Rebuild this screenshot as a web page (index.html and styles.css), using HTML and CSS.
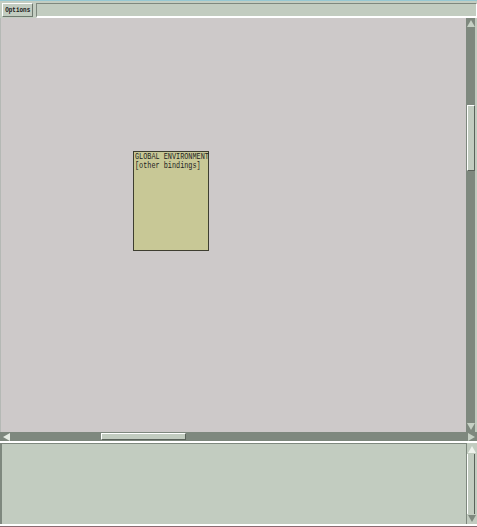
FILE: index.html
```html
<!DOCTYPE html>
<html>
<head>
<meta charset="utf-8">
<link rel="stylesheet" href="styles.css">
</head>
<body>
<div class="app">
  <div class="topbar">
    <div class="btn"><span class="btn-label">Options</span></div>
    <div class="entry"></div>
  </div>
  <div class="main">
    <div class="canvas">
      <div class="env">
        <div class="env-text">GLOBAL ENVIRONMENT</div>
        <div class="env-text">[other bindings]</div>
      </div>
    </div>
    <div class="vscroll">
      <div class="arrow up"></div>
      <div class="track">
        <div class="vthumb"></div>
      </div>
      <div class="arrow down"></div>
    </div>
  </div>
  <div class="hscroll">
    <div class="arrow left"></div>
    <div class="htrack">
      <div class="hthumb"></div>
    </div>
    <div class="arrow right"></div>
  </div>
  <div class="bottom">
    <div class="textarea"></div>
    <div class="vscroll light">
      <div class="arrow up"></div>
      <div class="track full"></div>
      <div class="arrow down"></div>
    </div>
  </div>
  <div class="footer"></div>
</div>
</body>
</html>
```
FILE: styles.css
```css
* { box-sizing: border-box; }
html, body { margin: 0; padding: 0; }
body { width: 477px; height: 527px; overflow: hidden; background: #c2ccc0; font-family: "Liberation Mono", monospace; }
.app { display: flex; flex-direction: column; width: 477px; height: 527px; }

.topbar { height: 18px; display: flex; align-items: flex-start; gap: 3px; padding: 2px 0 0 2px; background: #c3cdc1; border-top: 1px solid #96c8d2; }
.btn { width: 31px; height: 14px; background: #c2ccc0; border-top: 1px solid #fff; border-left: 1px solid #fff; border-right: 1px solid #6e786e; border-bottom: 1px solid #6e786e; display: flex; align-items: center; justify-content: center; overflow: hidden; }
.btn-label { font-size: 7px; font-weight: bold; color: #1a1a1a; transform: scaleX(0.85); white-space: nowrap; }
.entry { flex: 1; height: 15px; background: #c2ccc0; border-top: 1px solid #7e887e; border-left: 1px solid #7e887e; border-right: 1px solid #fff; border-bottom: 2px solid #fff; }

.main { height: 414px; display: flex; }
.canvas { flex: 1; position: relative; background: #cdc9c9; border-left: 1px solid #b5b9b5; }
.env { position: absolute; left: 132px; top: 133px; width: 76px; height: 100px; background: #c8c896; border: 1px solid #3e3e30; padding: 1px 0 0 1px; }
.env-text { font-size: 9px; line-height: 9px; height: 9px; width: max-content; color: #222; white-space: nowrap; transform: scaleX(0.76); transform-origin: left top; }

.vscroll { width: 11px; display: flex; flex-direction: column; background: #7e887e; border-right: 2px solid #c2ccc0; }
.vscroll .track { flex: 1; position: relative; }
.vthumb { position: absolute; left: 1px; right: 0; top: 77px; height: 66px; background: #c2ccc0; border-top: 1px solid #fff; border-left: 1px solid #fff; border-right: 1px solid #5a625a; border-bottom: 1px solid #5a625a; }
.arrow { width: 9px; height: 10px; position: relative; flex: none; }
.arrow::before { content: ""; position: absolute; width: 0; height: 0; }
.arrow.up::before { left: 1px; top: 2px; border-left: 4px solid transparent; border-right: 4px solid transparent; border-bottom: 7px solid #c6d0c4; }
.arrow.down::before { left: 1px; top: 1px; border-left: 4px solid transparent; border-right: 4px solid transparent; border-top: 7px solid #c6d0c4; }
.arrow.left::before { left: 2px; top: 1px; border-top: 4px solid transparent; border-bottom: 4px solid transparent; border-right: 7px solid #e6ece4; }
.arrow.right::before { left: 1px; top: 1px; border-top: 4px solid transparent; border-bottom: 4px solid transparent; border-left: 7px solid #c6d0c4; }

.hscroll { height: 11px; display: flex; background: #7e887e; border-bottom: 2px solid #fff; padding-left: 1px; }
.arrow.left, .arrow.right { width: 10px; height: 9px; }
.htrack { flex: 1; position: relative; }
.hthumb { position: absolute; left: 90px; width: 85px; top: 1px; height: 7px; background: #c2ccc0; border-top: 1px solid #fff; border-left: 1px solid #fff; border-right: 1px solid #5a625a; border-bottom: 1px solid #5a625a; }

.bottom { flex: 1; display: flex; }
.textarea { flex: 1; background: #c2ccc0; border-top: 1px solid #7e887e; border-left: 2px solid #7e887e; }
.vscroll.light { background: #c2ccc0; border-left: 1px solid #7e887e; border-right: 2px solid #c2ccc0; padding-top: 1px; }
.vscroll.light .track.full { border-left: 1px solid #fff; border-right: 1px solid #5a625a; }
.vscroll.light .arrow.up::before { border-bottom-color: #eef2ec; }
.vscroll.light .arrow.down::before { border-top-color: #7e887e; }

.footer { height: 3px; background: #fff; border-bottom: 1px solid #8a6a70; }
```
